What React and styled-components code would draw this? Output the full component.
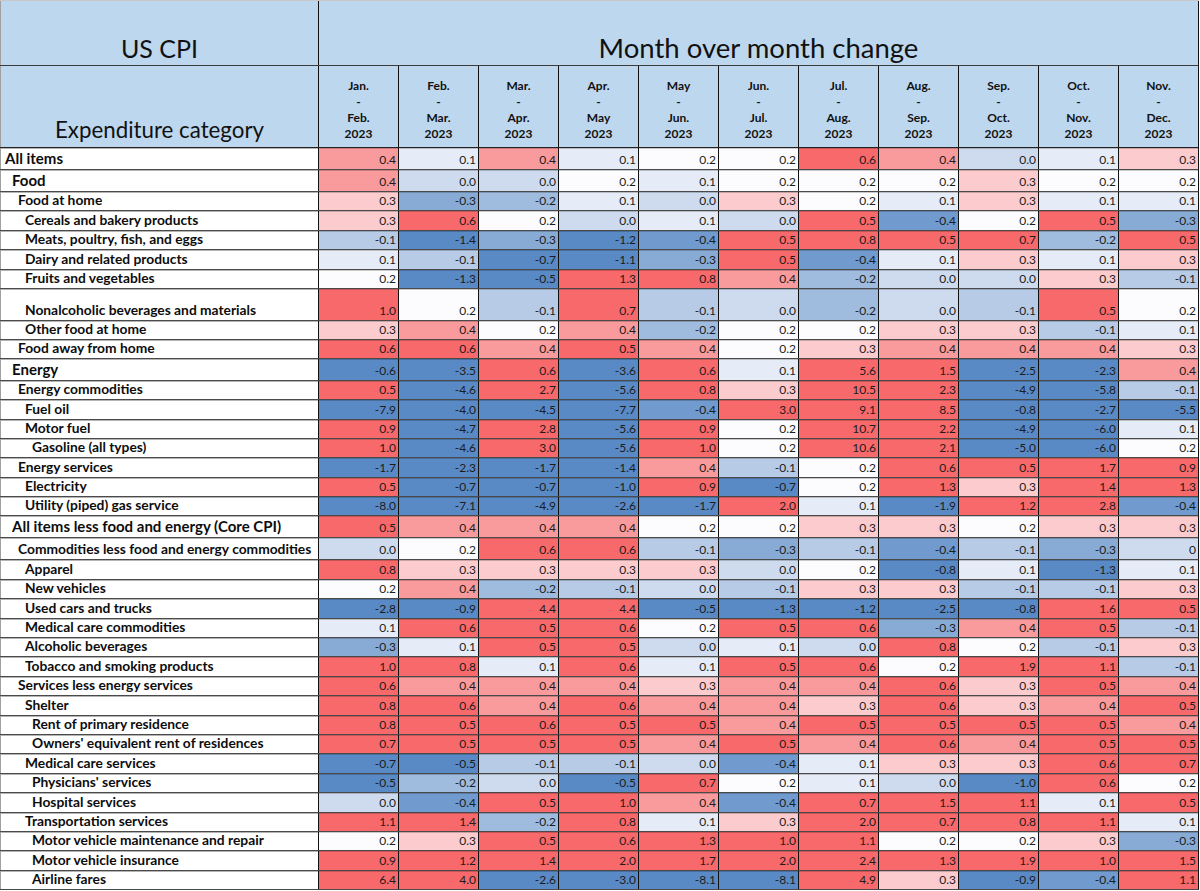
import React from "react";
import styled, { createGlobalStyle } from "styled-components";

// sheet geometry
const LABEL_W = 318;
const COL_W = 80;
const HEAD_BG = "#bdd7ee";

const months = [
  ["Jan.", "Feb."],
  ["Feb.", "Mar."],
  ["Mar.", "Apr."],
  ["Apr.", "May"],
  ["May", "Jun."],
  ["Jun.", "Jul."],
  ["Jul.", "Aug."],
  ["Aug.", "Sep."],
  ["Sep.", "Oct."],
  ["Oct.", "Nov."],
  ["Nov.", "Dec."],
];

// name, indent level, big font, row height, values
const rows = [
  ["All items", 0, true, 22, [0.4, 0.1, 0.4, 0.1, 0.2, 0.2, 0.6, 0.4, 0.0, 0.1, 0.3]],
  ["Food", 1, true, 22, [0.4, 0.0, 0.0, 0.2, 0.1, 0.2, 0.2, 0.2, 0.3, 0.2, 0.2]],
  ["Food at home", 2, false, 19.4, [0.3, -0.3, -0.2, 0.1, 0.0, 0.3, 0.2, 0.1, 0.3, 0.1, 0.1]],
  ["Cereals and bakery products", 3, false, 19.4, [0.3, 0.6, 0.2, 0.0, 0.1, 0.0, 0.5, -0.4, 0.2, 0.5, -0.3]],
  ["Meats, poultry, fish, and eggs", 3, false, 19.4, [-0.1, -1.4, -0.3, -1.2, -0.4, 0.5, 0.8, 0.5, 0.7, -0.2, 0.5]],
  ["Dairy and related products", 3, false, 19.4, [0.1, -0.1, -0.7, -1.1, -0.3, 0.5, -0.4, 0.1, 0.3, 0.1, 0.3]],
  ["Fruits and vegetables", 3, false, 19.4, [0.2, -1.3, -0.5, 1.3, 0.8, 0.4, -0.2, 0.0, 0.0, 0.3, -0.1]],
  ["Nonalcoholic beverages and materials", 3, false, 31.7, [1.0, 0.2, -0.1, 0.7, -0.1, 0.0, -0.2, 0.0, -0.1, 0.5, 0.2]],
  ["Other food at home", 3, false, 19.4, [0.3, 0.4, 0.2, 0.4, -0.2, 0.2, 0.2, 0.3, 0.3, -0.1, 0.1]],
  ["Food away from home", 2, false, 19.4, [0.6, 0.6, 0.4, 0.5, 0.4, 0.2, 0.3, 0.4, 0.4, 0.4, 0.3]],
  ["Energy", 1, true, 21.3, [-0.6, -3.5, 0.6, -3.6, 0.6, 0.1, 5.6, 1.5, -2.5, -2.3, 0.4]],
  ["Energy commodities", 2, false, 19.4, [0.5, -4.6, 2.7, -5.6, 0.8, 0.3, 10.5, 2.3, -4.9, -5.8, -0.1]],
  ["Fuel oil", 3, false, 19.4, [-7.9, -4.0, -4.5, -7.7, -0.4, 3.0, 9.1, 8.5, -0.8, -2.7, -5.5]],
  ["Motor fuel", 3, false, 19.4, [0.9, -4.7, 2.8, -5.6, 0.9, 0.2, 10.7, 2.2, -4.9, -6.0, 0.1]],
  ["Gasoline (all types)", 4, false, 19.4, [1.0, -4.6, 3.0, -5.6, 1.0, 0.2, 10.6, 2.1, -5.0, -6.0, 0.2]],
  ["Energy services", 2, false, 19.4, [-1.7, -2.3, -1.7, -1.4, 0.4, -0.1, 0.2, 0.6, 0.5, 1.7, 0.9]],
  ["Electricity", 3, false, 19.4, [0.5, -0.7, -0.7, -1.0, 0.9, -0.7, 0.2, 1.3, 0.3, 1.4, 1.3]],
  ["Utility (piped) gas service", 3, false, 19.4, [-8.0, -7.1, -4.9, -2.6, -1.7, 2.0, 0.1, -1.9, 1.2, 2.8, -0.4]],
  ["All items less food and energy (Core CPI)", 1, true, 21.7, [0.5, 0.4, 0.4, 0.4, 0.2, 0.2, 0.3, 0.3, 0.2, 0.3, 0.3]],
  ["Commodities less food and energy commodities", 2, false, 22.3, [0.0, 0.2, 0.6, 0.6, -0.1, -0.3, -0.1, -0.4, -0.1, -0.3, "0"]],
  ["Apparel", 3, false, 19.4, [0.8, 0.3, 0.3, 0.3, 0.3, 0.0, 0.2, -0.8, 0.1, -1.3, 0.1]],
  ["New vehicles", 3, false, 19.4, [0.2, 0.4, -0.2, -0.1, 0.0, -0.1, 0.3, 0.3, -0.1, -0.1, 0.3]],
  ["Used cars and trucks", 3, false, 19.4, [-2.8, -0.9, 4.4, 4.4, -0.5, -1.3, -1.2, -2.5, -0.8, 1.6, 0.5]],
  ["Medical care commodities", 3, false, 19.4, [0.1, 0.6, 0.5, 0.6, 0.2, 0.5, 0.6, -0.3, 0.4, 0.5, -0.1]],
  ["Alcoholic beverages", 3, false, 19.4, [-0.3, 0.1, 0.5, 0.5, 0.0, 0.1, 0.0, 0.8, 0.2, -0.1, 0.3]],
  ["Tobacco and smoking products", 3, false, 19.4, [1.0, 0.8, 0.1, 0.6, 0.1, 0.5, 0.6, 0.2, 1.9, 1.1, -0.1]],
  ["Services less energy services", 2, false, 19.4, [0.6, 0.4, 0.4, 0.4, 0.3, 0.4, 0.4, 0.6, 0.3, 0.5, 0.4]],
  ["Shelter", 3, false, 19.4, [0.8, 0.6, 0.4, 0.6, 0.4, 0.4, 0.3, 0.6, 0.3, 0.4, 0.5]],
  ["Rent of primary residence", 4, false, 19.4, [0.8, 0.5, 0.6, 0.5, 0.5, 0.4, 0.5, 0.5, 0.5, 0.5, 0.4]],
  ["Owners' equivalent rent of residences", 4, false, 19.4, [0.7, 0.5, 0.5, 0.5, 0.4, 0.5, 0.4, 0.6, 0.4, 0.5, 0.5]],
  ["Medical care services", 3, false, 19.4, [-0.7, -0.5, -0.1, -0.1, 0.0, -0.4, 0.1, 0.3, 0.3, 0.6, 0.7]],
  ["Physicians' services", 4, false, 19.4, [-0.5, -0.2, 0.0, -0.5, 0.7, 0.2, 0.1, 0.0, -1.0, 0.6, 0.2]],
  ["Hospital services", 4, false, 19.4, [0.0, -0.4, 0.5, 1.0, 0.4, -0.4, 0.7, 1.5, 1.1, 0.1, 0.5]],
  ["Transportation services", 3, false, 19.4, [1.1, 1.4, -0.2, 0.8, 0.1, 0.3, 2.0, 0.7, 0.8, 1.1, 0.1]],
  ["Motor vehicle maintenance and repair", 4, false, 19.4, [0.2, 0.3, 0.5, 0.6, 1.3, 1.0, 1.1, 0.2, 0.2, 0.3, -0.3]],
  ["Motor vehicle insurance", 4, false, 19.4, [0.9, 1.2, 1.4, 2.0, 1.7, 2.0, 2.4, 1.3, 1.9, 1.0, 1.5]],
  ["Airline fares", 4, false, 19.4, [6.4, 4.0, -2.6, -3.0, -8.1, -8.1, 4.9, 0.3, -0.9, -0.4, 1.1]],
];

const indents = [4, 11, 17, 24, 31];

// excel style 3-colour scale: blue / white / red, mid at 0.2
const BLUE = [90, 138, 198];
const WHITE = [252, 252, 255];
const RED = [248, 105, 107];

const mix = (to, t) =>
  `rgb(${WHITE.map((c, i) => Math.round(c + (to[i] - c) * t)).join(",")})`;

const shade = (raw) => {
  const v = Number(raw);
  if (v >= 0.2) return mix(RED, Math.min(1, (v - 0.2) / 0.3));
  return mix(BLUE, Math.min(1, (0.2 - v) / 0.7));
};

const fmt = (v) => (typeof v === "string" ? v : v.toFixed(1));

//Styles
const GlobalStyle = createGlobalStyle`
  body {
    margin: 0;
    background: #fff;
    font-family: Lato, "Open Sans", sans-serif;
    color: #111;
  }
`;

const Sheet = styled.div`
  width: ${LABEL_W + COL_W * 11 + 1}px;
  border-top: 1px solid #c8c8c8;
`;

const TitleRow = styled.div`
  display: grid;
  grid-template-columns: ${LABEL_W}px ${COL_W * 11}px;
  height: 65px;
  box-sizing: border-box;
  background: ${HEAD_BG};
  border-bottom: 1px solid #3c3c3c;
  border-right: 1px solid #111;
`;

const Title = styled.div`
  display: flex;
  align-items: flex-end;
  justify-content: center;
  box-sizing: border-box;
  padding-bottom: 2px;
  font-size: ${(p) => (p.$wide ? 27.5 : 25)}px;
  line-height: 30px;
  border-left: 1px solid ${(p) => (p.$wide ? "#111" : "#a0a0a0")};
`;

const HeadRow = styled.div`
  display: grid;
  grid-template-columns: ${LABEL_W}px repeat(11, ${COL_W}px);
  height: 82px;
  box-sizing: border-box;
  background: ${HEAD_BG};
  border-bottom: 1px solid #222;
  border-right: 1px solid #111;
`;

const CategoryHead = styled.div`
  display: flex;
  align-items: flex-end;
  justify-content: center;
  padding-bottom: 4px;
  font-size: 22.3px;
  line-height: 26px;
  border-left: 1px solid #a0a0a0;
`;

const MonthHead = styled.div`
  display: flex;
  flex-direction: column;
  justify-content: flex-end;
  align-items: center;
  padding-bottom: 5px;
  font-size: 12px;
  font-weight: 700;
  line-height: 16px;
  border-left: 1px solid #111;
`;

const Row = styled.div`
  display: grid;
  grid-template-columns: ${LABEL_W}px repeat(11, ${COL_W}px);
  height: ${(p) => p.$h}px;
  box-sizing: border-box;
  border-bottom: 1px solid #4a4a4a;
  border-right: 1px solid #111;
`;

const Label = styled.div`
  display: flex;
  align-items: flex-end;
  padding-left: ${(p) => p.$indent}px;
  padding-bottom: 2px;
  font-size: ${(p) => (p.$big ? 15 : 13.8)}px;
  line-height: ${(p) => (p.$big ? 18 : 16)}px;
  font-weight: 700;
  white-space: nowrap;
  background: #fff;
  border-left: 1px solid #a0a0a0;
  box-shadow: inset 0 1px 0 #b4b4b4;
  color: #0d0d0d;
`;

const Value = styled.div`
  display: flex;
  align-items: flex-end;
  justify-content: flex-end;
  padding: 0 2px 2px 0;
  font-size: 12px;
  line-height: 14px;
  background: ${(p) => p.$bg};
  border-left: 1px solid #111;
  box-shadow: inset 0 1px 0 rgba(0, 0, 0, 0.2);
  color: #1c1c1c;
`;

const App = () => {
  return (
    <>
      <GlobalStyle />
      <Sheet>
        <TitleRow>
          <Title>US CPI</Title>
          <Title $wide>Month over month change</Title>
        </TitleRow>
        <HeadRow>
          <CategoryHead>Expenditure category</CategoryHead>
          {months.map(([from, to]) => (
            <MonthHead key={from}>
              <span>{from}</span>
              <span>-</span>
              <span>{to}</span>
              <span>2023</span>
            </MonthHead>
          ))}
        </HeadRow>
        {rows.map(([name, lvl, big, h, values]) => (
          <Row key={name} $h={h}>
            <Label $indent={indents[lvl]} $big={big}>
              {name}
            </Label>
            {values.map((v, i) => (
              <Value key={i} $bg={shade(v)}>
                {fmt(v)}
              </Value>
            ))}
          </Row>
        ))}
      </Sheet>
    </>
  );
};

export default App;
